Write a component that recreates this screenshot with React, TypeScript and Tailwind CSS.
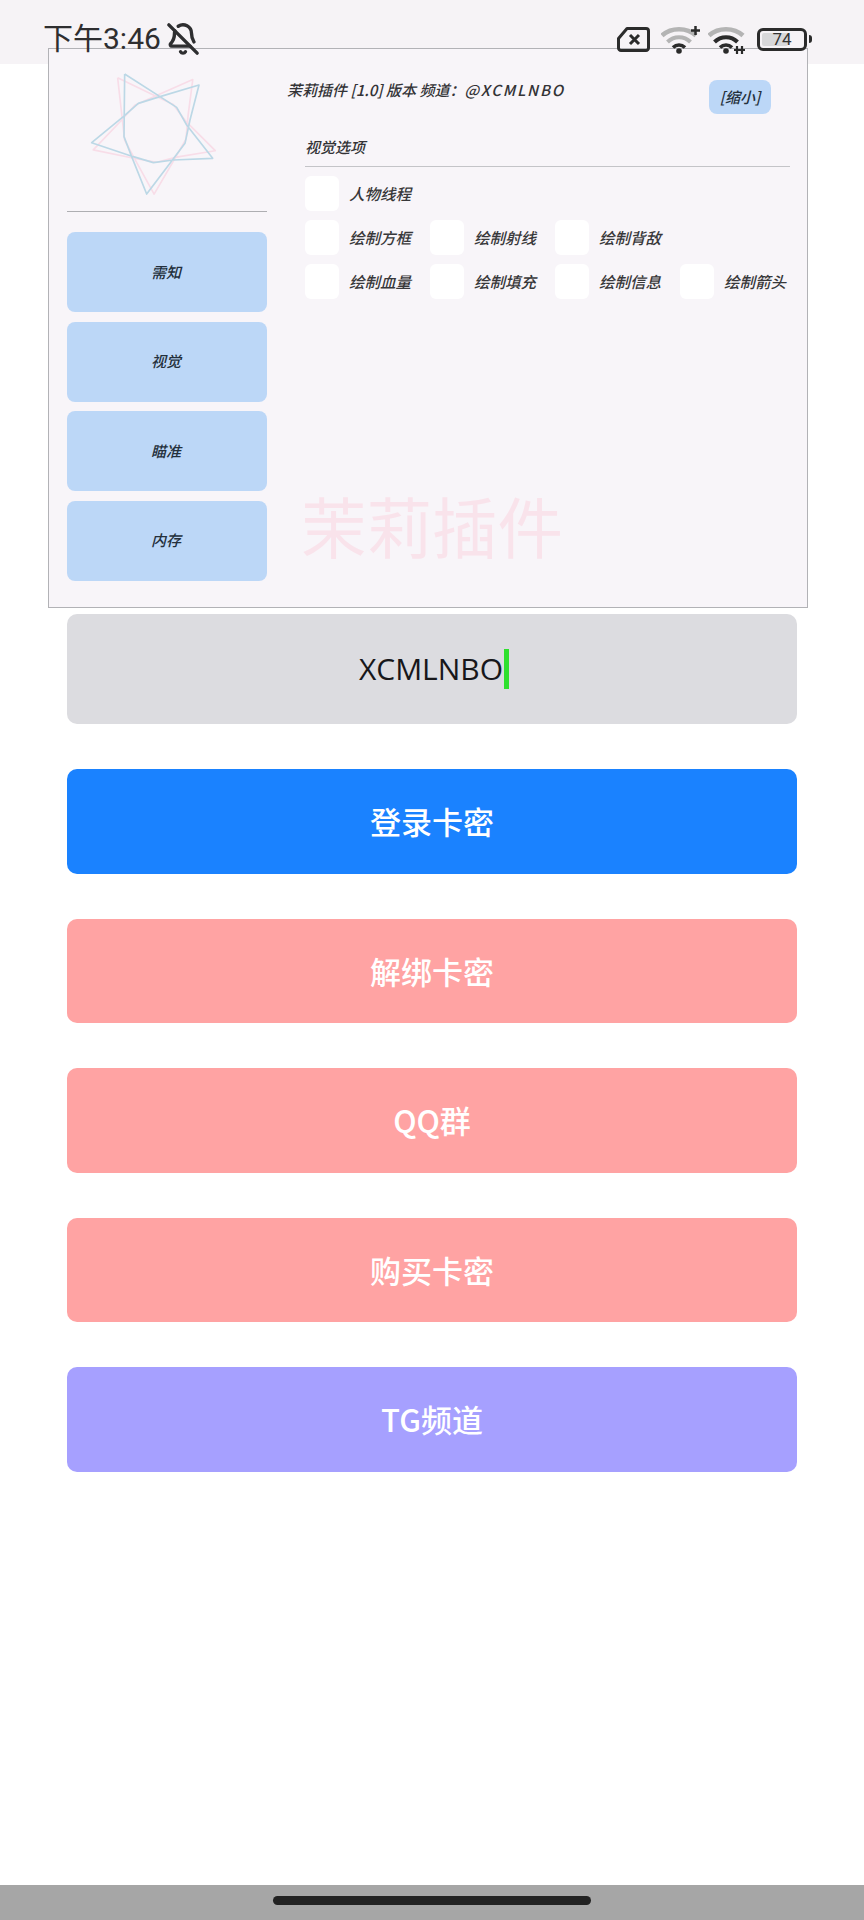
import { BellOff } from "lucide-react";

const CJK = "font-['Noto_Sans_CJK_SC','Noto_Sans',sans-serif]";

const sideTabs = ["需知", "视觉", "瞄准", "内存"];

const optionRows = [
  ["人物线程"],
  ["绘制方框", "绘制射线", "绘制背敌"],
  ["绘制血量", "绘制填充", "绘制信息", "绘制箭头"],
];

const actions = [
  { label: "登录卡密", color: "bg-[#1a82ff]" },
  { label: "解绑卡密", color: "bg-[#ffa3a3]" },
  { label: "QQ群", color: "bg-[#ffa3a3]" },
  { label: "购买卡密", color: "bg-[#ffa3a3]" },
  { label: "TG频道", color: "bg-[#a6a0ff]" },
];

const starPoints =
  "374,222 480,290 530,322 560,375 638,475 520,480 460,488 400,470 275,428 370,350 415,310 480,290 597,255 570,360 555,430 510,490 440,582 395,470 372,410 374,222";

const Logo = () => (
  <svg width="140" height="132" viewBox="252 204 420 396" fill="none" className="ml-[17px]">
    <polyline
      points={starPoints}
      stroke="#f8dde8"
      strokeWidth="5"
      strokeLinejoin="round"
      transform="rotate(-7 455 400)"
    />
    <polyline points={starPoints} stroke="#bcd8e6" strokeWidth="5" strokeLinejoin="round" />
  </svg>
);

const SimIcon = () => (
  <svg width="33" height="25" viewBox="0 0 33 25" fill="none" stroke="#2b2b2b">
    <path d="M10 1.500H29a2.500 2.500 0 0 1 2.500 2.500v17a2.500 2.500 0 0 1-2.500 2.500H4A2.500 2.500 0 0 1 1.500 21v-9.500z" strokeWidth="3" strokeLinejoin="round" />
    <path d="M13 8l9 9M22 8l-9 9" strokeWidth="3" />
  </svg>
);

const WifiIcon = ({ extra }: { extra: "plus" | "arrows" }) => (
  <svg width="40" height="29" viewBox="0 0 40 29" fill="none">
    <path d="M1 10.500C10 2 26 2 35 10.500" stroke="#b4b4b4" strokeWidth="4.500" />
    <path d="M6.500 17C13 10.500 23 10.500 29.500 17" stroke={extra === "plus" ? "#b4b4b4" : "#2b2b2b"} strokeWidth="4" />
    <path d="M12 22.500C15.500 19 20.500 19 24 22.500" stroke="#2b2b2b" strokeWidth="3.500" />
    <circle cx="18" cy="26" r="2.800" fill="#2b2b2b" />
    {extra === "plus" ? (
      <path d="M34.500 1v9M30 5.500h9" stroke="#2b2b2b" strokeWidth="2.500" />
    ) : (
      <path d="M29 21v8M34 21v8M26 25h11" stroke="#2b2b2b" strokeWidth="2.200" />
    )}
  </svg>
);

const Battery = () => (
  <div className="flex items-center gap-[2px]">
    <div className="relative flex h-[23px] w-[50px] items-center justify-center rounded-[6px] border-[3px] border-[#2b2b2b] p-[2px]">
      <div className="absolute inset-y-[2px] left-[2px] w-[26px] rounded-[2px] bg-[#d8d8da]" />
      <span className="relative font-['Roboto',sans-serif] text-[17px] leading-none text-[#333333]">74</span>
    </div>
    <div className="h-[8px] w-[3px] rounded-r-sm bg-[#2b2b2b]" />
  </div>
);

const App = () => {
  return (
    <div className={`relative flex h-[1920px] w-[864px] flex-col overflow-hidden bg-white ${CJK}`}>
      <div className="flex h-16 items-center justify-between bg-[#f6f3f6] pl-[43px] pr-[57px] pt-[14px]">
        <div className="relative z-20 flex items-center gap-[5px] text-[#2e2e30]">
          <span className="font-['Roboto','Noto_Sans_CJK_SC',sans-serif] text-[30px] leading-none">下午3:46</span>
          <BellOff size={34} strokeWidth={2.4} />
        </div>
        <div className="relative z-20 flex items-center">
          <SimIcon />
          <div className="ml-[11px]">
            <WifiIcon extra="plus" />
          </div>
          <div className="ml-[7px]">
            <WifiIcon extra="arrows" />
          </div>
          <div className="ml-[9px] -mr-[5px]">
            <Battery />
          </div>
        </div>
      </div>

      {/* floating menu window */}
      <div className="absolute left-12 top-12 z-10 flex h-[560px] w-[760px] border border-[#b2b2b6] bg-[#f8f5f9]">
        <div className="ml-[18px] flex w-[200px] shrink-0 flex-col">
          <div className="h-[163px] border-b border-[#aeaeb2] pt-[19px]">
            <Logo />
          </div>
          <div className="mt-[20px] flex flex-col gap-[9.5px]">
            {sideTabs.map((tab) => (
              <div
                key={tab}
                className="flex h-[80px] items-center justify-center rounded-[8px] bg-[#bcd7f7] pr-[2px] text-[15px] font-medium italic text-[#24303c]"
              >
                {tab}
              </div>
            ))}
          </div>
        </div>

        <div className="ml-[20px] flex min-w-0 flex-1 flex-col">
          <div className="mr-[36px] mt-[31px] flex items-start justify-between">
            <span className="text-[15px] font-medium italic leading-[20px] text-[#333336]">
              茉莉插件 [1.0] 版本 频道：<span className="tracking-[1.800px]">@XCMLNBO</span>
            </span>
            <div className="flex h-[34px] w-[62px] items-center justify-center rounded-[8px] bg-[#bcd7f7] text-[15px] font-medium italic text-[#24303c]">
              [缩小]
            </div>
          </div>

          <div className="ml-[18px] mr-[17px] mt-[23px]">
            <div className="border-b border-[#c4c4c8] pb-[9px] text-[15px] font-medium italic leading-[20px] text-[#333336]">
              视觉选项
            </div>
            <div className="mt-[9px] flex flex-col gap-[9px]">
              {optionRows.map((row) => (
                <div key={row[0]} className="grid grid-cols-[125px_125px_125px_125px]">
                  {row.map((label) => (
                    <div key={label} className="flex items-center gap-[10px]">
                      <div className="h-[35px] w-[34px] shrink-0 rounded-[6px] bg-white" />
                      <span className="whitespace-nowrap text-[15.5px] font-medium italic text-[#38383a]">{label}</span>
                    </div>
                  ))}
                </div>
              ))}
            </div>
          </div>

          <div className="mb-[50px] ml-[14px] mt-auto text-[65.5px] leading-none text-[#f9e3eb]">茉莉插件</div>
        </div>
      </div>

      <main className="flex flex-col gap-[45px] px-[67px] pt-[550px]">
        <div className="flex h-[110px] items-center justify-center rounded-[10px] bg-[#dcdce0] pl-[4px]">
          <span className="font-['Open_Sans',sans-serif] text-[30px] leading-none text-[#17171a]">XCMLNBO</span>
          <div className="ml-[1px] h-[40px] w-[5px] bg-[#2fe02f]" />
        </div>
        {actions.map((action) => (
          <div
            key={action.label}
            className={`flex h-[104.5px] items-center justify-center rounded-[10px] text-[31px] font-medium text-white ${action.color}`}
          >
            {action.label}
          </div>
        ))}
      </main>

      <div className="mt-auto flex h-[35px] justify-center bg-[#a6a6a6] pt-[11px]">
        <div className="h-[9px] w-[318px] rounded-full bg-[#222222]" />
      </div>
    </div>
  );
};

export default App;
